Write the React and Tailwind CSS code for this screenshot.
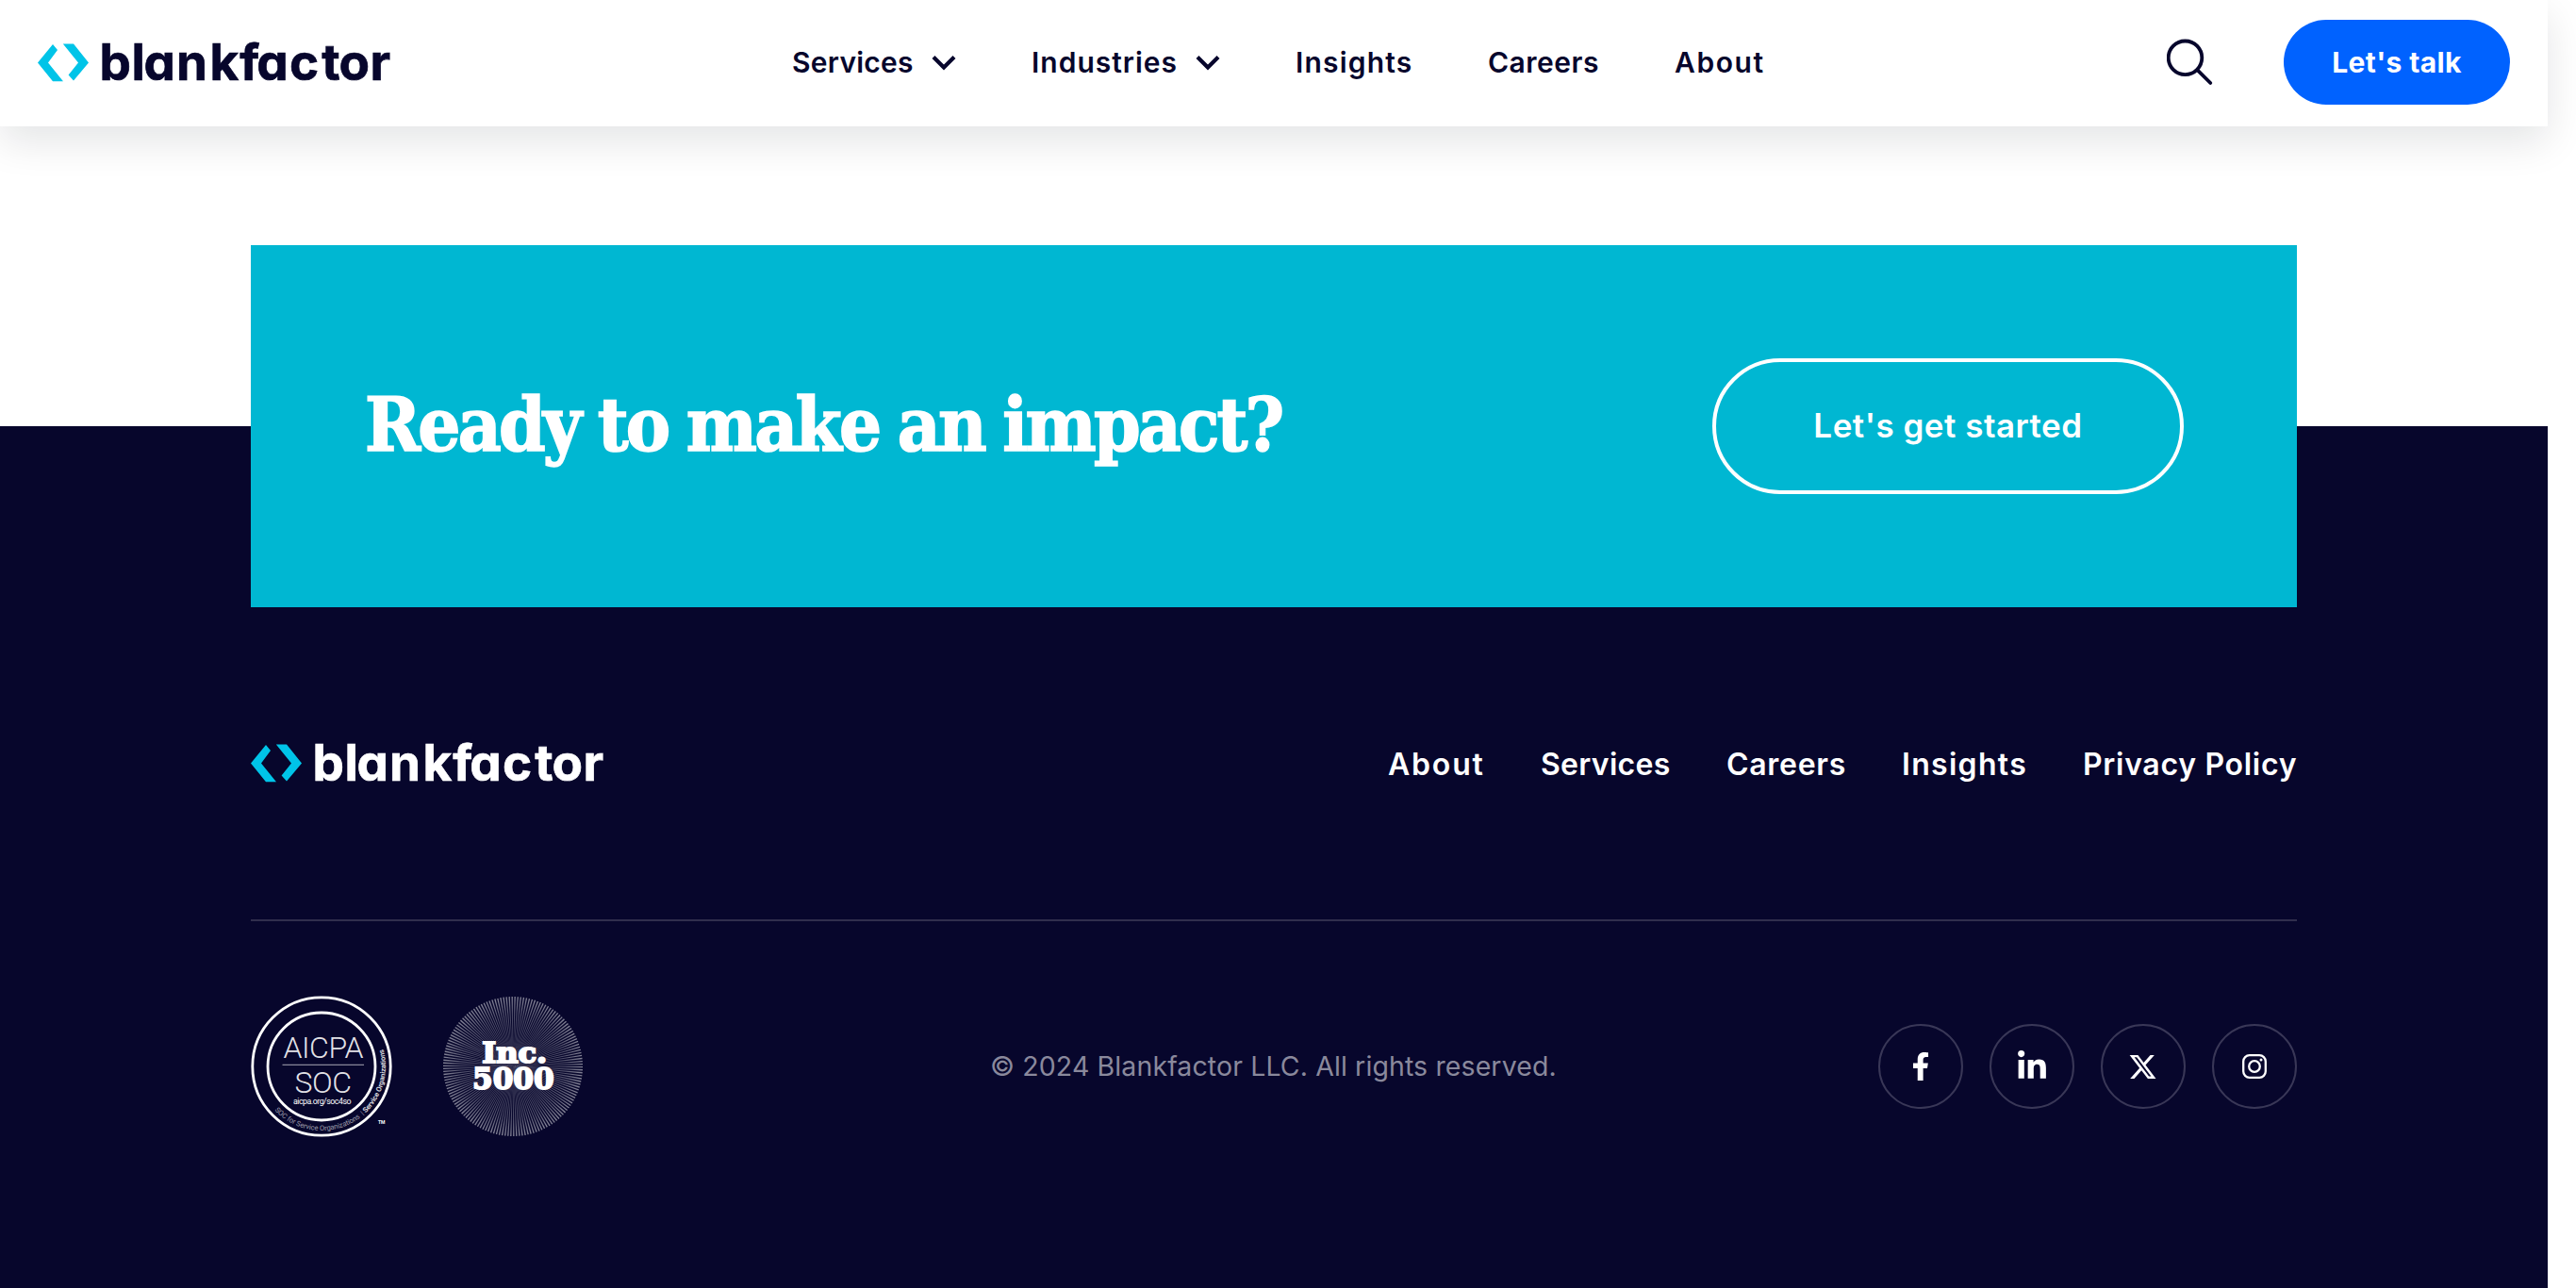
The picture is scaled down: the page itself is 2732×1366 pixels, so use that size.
import React from "react";
import { FaFacebookF, FaLinkedinIn } from "react-icons/fa";

function Logo({ textColor }) {
  return (
    <svg width="380" height="72" viewBox="0 -14 380 72" role="img" aria-label="blankfactor">
      <path d="M0 21.5 16 2l5 6-10 13.5L27 41.2H16Z" fill="#00c4e8" />
      <path d="M26.8 1.5H38l16 20-16 19-5.4-6L43 21.5Z" fill="#00c4e8" />
      <text
        x="65.4 99.6 112.6 147 182.4 214.2 232.2 267 301.2 319.6 352.4"
        y="39.8"
        fill={textColor}
        stroke={textColor}
        strokeWidth="0.7"
        className="font-['Inter',sans-serif] text-[53px] font-bold [font-feature-settings:'cv11']"
      >
        blankfactor
      </text>
    </svg>
  );
}

function Chevron() {
  return (
    <svg width="26" height="18" viewBox="0 0 26 18" fill="none" className="mt-0.5">
      <path d="m2 2.5 11 11 11-11" stroke="#07062c" strokeWidth="4.2" />
    </svg>
  );
}

const NAV = [
  { label: "Services", menu: true, cls: "w-[174px] tracking-[0.25px]" },
  { label: "Industries", menu: true, cls: "w-[200px] tracking-[1px]" },
  { label: "Insights", cls: "w-[124px] tracking-[1.2px]" },
  { label: "Careers", cls: "w-[118px] tracking-[0.5px]" },
  { label: "About", cls: "w-[96px] tracking-[1.6px]" },
];

const FOOTER_NAV = [
  { label: "About", cls: "w-[102px] tracking-[1.8px]" },
  { label: "Services", cls: "w-[137px] tracking-[0.3px]" },
  { label: "Careers", cls: "w-[126px] tracking-[0.7px]" },
  { label: "Insights", cls: "w-[132px] tracking-[1.3px]" },
  { label: "Privacy Policy", cls: "w-[227px] tracking-[0.7px]" },
];

function Header() {
  return (
    <header className="relative z-10 flex h-[134px] items-center bg-white px-10 shadow-[0_16px_40px_rgba(7,20,30,0.11)]">
      <div className="w-[800px]">
        <Logo textColor="#07062c" />
      </div>
      <nav className="mb-0.5 flex flex-1 gap-20 text-[30px] font-semibold">
        {NAV.map((n) => (
          <a key={n.label} className={`flex items-center justify-between whitespace-nowrap ${n.cls}`}>
            {n.label}
            {n.menu && <Chevron />}
          </a>
        ))}
      </nav>
      <svg width="52" height="52" viewBox="0 0 52 52" fill="none" stroke="#07062c" strokeWidth="3.8" strokeLinecap="round" className="mr-[72px]">
        <circle cx="19.5" cy="20.3" r="17.8" />
        <path d="m32.6 33.4 13.7 13.6" />
      </svg>
      <button className="mb-[2px] h-[90px] w-60 rounded-full bg-[#0062ff] text-[30px] font-bold tracking-[0.4px] text-white">
        Let's talk
      </button>
    </header>
  );
}

function SocBadge() {
  return (
    <svg width="150" height="150" viewBox="0 0 150 150" fill="#fff" className="font-['Roboto',sans-serif]">
      <defs>
        <path id="soc-ring" d="M25.3 121.4A68 68 0 0 0 140.4 56.3" />
      </defs>
      <circle cx="75" cy="75" r="73.2" fill="none" stroke="#fff" strokeWidth="2.8" />
      <circle cx="75" cy="75" r="57" fill="none" stroke="#fff" strokeWidth="2.8" />
      <text x="34.5" y="66.3" textLength="85" fillOpacity="0.9" className="text-[32px] font-light">AICPA</text>
      <path d="M33.5 73.3H120" stroke="#fff" strokeOpacity="0.65" />
      <text x="46.5" y="103" textLength="60.5" fillOpacity="0.9" className="text-[32px] font-light">SOC</text>
      <text x="45" y="115" textLength="61.5" className="text-[8.8px]">aicpa.org/soc4so</text>
      <text className="text-[7.6px]">
        <textPath href="#soc-ring" textLength="181">
          <tspan fillOpacity="0.6">SOC for Service Organizations &nbsp;| </tspan>
          <tspan className="font-bold" fillOpacity="0.85">Service Organizations</tspan>
        </textPath>
      </text>
      <text x="135" y="136" className="text-[5px] font-bold">TM</text>
    </svg>
  );
}

function IncBadge() {
  return (
    <svg width="148" height="148" viewBox="0 0 148 148" fill="#fff">
      <defs>
        <radialGradient id="rays" gradientUnits="userSpaceOnUse" cx="74" cy="74" r="74">
          <stop offset="0" stopColor="#fff" stopOpacity="0.45" />
          <stop offset="0.45" stopColor="#fff" stopOpacity="0.26" />
          <stop offset="0.75" stopColor="#fff" stopOpacity="0.32" />
          <stop offset="1" stopColor="#fff" stopOpacity="0.5" />
        </radialGradient>
      </defs>
      <circle cx="74" cy="74" r="37" fill="none" stroke="url(#rays)" strokeWidth="74" pathLength="300" strokeDasharray="0.9 1.1" />
      <text x="41.2" y="69.5" textLength="69" lengthAdjust="spacingAndGlyphs" stroke="#fff" strokeWidth="2" className="font-['DejaVu_Serif',serif] text-[29px] font-bold">Inc.</text>
      <text x="31" y="97.5" textLength="86.5" lengthAdjust="spacingAndGlyphs" stroke="#fff" strokeWidth="2" className="font-['DejaVu_Serif',serif] text-[32px] font-bold">5000</text>
    </svg>
  );
}

function Social({ label, children }) {
  return (
    <a aria-label={label} className="flex size-[90px] items-center justify-center rounded-full border-2 border-[#393757]">
      {children}
    </a>
  );
}

function Footer() {
  return (
    <footer className="flex h-[914px] flex-col bg-[#07062c] px-[266px] text-white">
      <section className="z-0 -mt-48 flex h-96 shrink-0 items-center justify-between bg-[#00b7d2] pr-[120px] pl-[121px]">
        <h2 className="mb-[3px] font-['DejaVu_Serif_Condensed','DejaVu_Serif',serif] text-[79px] leading-none font-bold tracking-[-2.8px] whitespace-nowrap [-webkit-text-stroke:1.6px_white] [word-spacing:-2.5px]">
          Ready to make an impact?
        </h2>
        <button className="h-36 w-[500px] rounded-full border-4 border-white pb-px text-[35px] font-semibold tracking-[0.5px]">
          Let's get started
        </button>
      </section>
      <div className="mt-[142px] flex h-12 shrink-0 items-center justify-between">
        <Logo textColor="#fff" />
        <nav className="mt-px flex gap-[60px] text-[32px] font-semibold">
          {FOOTER_NAV.map((n) => (
            <a key={n.label} className={`whitespace-nowrap ${n.cls}`}>{n.label}</a>
          ))}
        </nav>
      </div>
      <div className="mt-[141px] h-0.5 shrink-0 bg-[#302e4d]" />
      <div className="mt-[79px] flex h-[150px] shrink-0 items-center">
        <div className="flex w-[784px] items-center gap-[54px]">
          <SocBadge />
          <IncBadge />
        </div>
        <p className="flex-1 text-[28.5px] tracking-[0.11px] whitespace-nowrap text-[#8a899c]">
          © 2024 Blankfactor LLC. All rights reserved.
        </p>
        <div className="flex gap-7">
          <Social label="Facebook"><FaFacebookF size={30} /></Social>
          <Social label="LinkedIn"><FaLinkedinIn size={34} /></Social>
          <Social label="X">
            <svg width="31" height="31" viewBox="0 0 24 24" fill="currentColor" className="-ml-px">
              <path d="M18.244 2.25h3.308l-7.227 8.26 8.502 11.24H16.17l-5.214-6.817L4.99 21.75H1.68l7.73-8.835L1.254 2.25H8.08l4.713 6.231zm-1.161 17.52h1.833L7.084 4.126H5.117z" />
            </svg>
          </Social>
          <Social label="Instagram">
            <svg width="30" height="30" viewBox="0 0 30 30" fill="none" stroke="currentColor" strokeWidth="2.3">
              <rect x="3.2" y="3.2" width="23.6" height="23.6" rx="6.5" />
              <circle cx="15" cy="15" r="5.8" />
              <circle cx="22" cy="8" r="1.5" fill="currentColor" stroke="none" />
            </svg>
          </Social>
        </div>
      </div>
    </footer>
  );
}

export default function App() {
  return (
    <div className="h-[1366px] w-[2732px] overflow-hidden bg-white font-['Inter','Liberation_Sans',sans-serif] text-[#07062c]">
      <div className="w-[2702px]">
        <Header />
        <main className="h-[318px]" />
        <Footer />
      </div>
    </div>
  );
}
